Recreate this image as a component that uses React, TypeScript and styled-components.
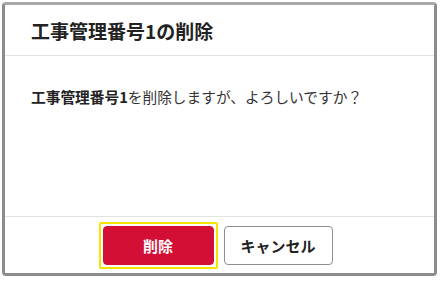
import React from "react";
import styled, { createGlobalStyle } from "styled-components";

const Global = createGlobalStyle`
  html, body { margin: 0; padding: 0; background: #ffffff; }
  body { font-family: "Noto Sans CJK JP", "Noto Sans", sans-serif; color: #222; }
`;

const Frame = styled.div`
  box-sizing: border-box;
  margin: 2px 0 0 2px;
  width: 435px;
  height: 274px;
  border: 3px solid #8c8c8c;
  border-top-color: #a8a8a8;
  border-radius: 4px;
  background: #fff;
  display: flex;
  flex-direction: column;
`;

const Header = styled.div`
  box-sizing: border-box;
  height: 51px;
  padding: 0 26px;
  display: flex;
  align-items: center;
  border-bottom: 1px solid #e3e3e3;
`;

const Title = styled.h2`
  margin: 0;
  font-size: 19px;
  font-weight: 700;
  color: #222;
  letter-spacing: 0;
`;

const Body = styled.div`
  flex: 1;
  box-sizing: border-box;
  padding: 30px 26px 0;
  border-bottom: 1px solid #e3e3e3;
`;

const Message = styled.p`
  margin: 0;
  font-size: 14.7px;
  line-height: 22px;
  color: #333;
  strong { font-weight: 700; color: #222; }
`;

const Footer = styled.div`
  box-sizing: border-box;
  height: 56px;
  display: flex;
  justify-content: center;
  align-items: center;
  gap: 10px;
  padding-right: 4px;
`;

const FocusRing = styled.span`
  display: inline-flex;
  padding: 2px;
  border: 2px solid #f5e400;
  border-radius: 2px;
  margin: -4px;
`;

const Button = styled.button<{ $variant: "danger" | "default" }>`
  box-sizing: border-box;
  width: ${(p) => (p.$variant === "danger" ? "111px" : "109px")};
  height: 39px;
  border-radius: 4px;
  font-family: "Noto Sans CJK JP", "Noto Sans", sans-serif;
  font-size: 15px;
  font-weight: 700;
  cursor: pointer;
  outline: none;
  background: ${(p) => (p.$variant === "danger" ? "#d30f35" : "#ffffff")};
  color: ${(p) => (p.$variant === "danger" ? "#ffffff" : "#222")};
  border: 1px solid ${(p) => (p.$variant === "danger" ? "#d30f35" : "#8f8f8f")};
`;

export default function App() {
  return (
    <>
      <Global />
      <Frame>
        <Header>
          <Title>工事管理番号1の削除</Title>
        </Header>
        <Body>
          <Message>
            <strong>工事管理番号1</strong>を削除しますが、よろしいですか？
          </Message>
        </Body>
        <Footer>
          <FocusRing>
            <Button $variant="danger">削除</Button>
          </FocusRing>
          <Button $variant="default">キャンセル</Button>
        </Footer>
      </Frame>
    </>
  );
}
